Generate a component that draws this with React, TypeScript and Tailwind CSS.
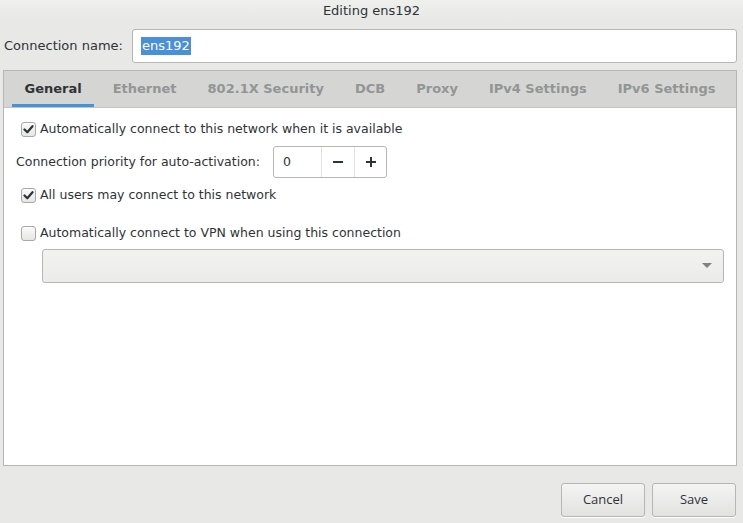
import { ReactNode } from "react";

const tabs = ["General", "Ethernet", "802.1X Security", "DCB", "Proxy", "IPv4 Settings", "IPv6 Settings"];

function CheckBox({ checked }: { checked: boolean }) {
  return (
    <span className="flex h-[15px] w-[15px] shrink-0 items-center justify-center rounded-[3px] border border-[#a8a8a5] bg-gradient-to-b from-[#fafafa] to-[#e6e6e5] shadow-[inset_0_1px_0_#ffffff]">
      {checked && (
        <svg width="11" height="11" viewBox="0 0 11 11">
          <path d="M1.5 5.5 L4.3 8.3 L9.5 2.2" fill="none" stroke="#2e3436" strokeWidth="2.2" strokeLinecap="round" strokeLinejoin="round" />
        </svg>
      )}
    </span>
  );
}

function CheckRow({ checked, children, className }: { checked: boolean; children: ReactNode; className?: string }) {
  return (
    <div className={"flex h-[20px] items-center gap-[4px] pl-[17px] " + (className ?? "")}>
      <CheckBox checked={checked} />
      <span className="whitespace-nowrap">{children}</span>
    </div>
  );
}

export default function App() {
  return (
    <div
      className="flex h-[523px] w-[743px] flex-col overflow-hidden bg-[#e8e8e7] text-[13px] text-[#2e3436]"
      style={{ fontFamily: '"DejaVu Sans", sans-serif' }}
    >
      <div className="flex h-[22px] shrink-0 items-center justify-center bg-gradient-to-b from-[#efefee] to-[#e8e8e7]">
        Editing ens192
      </div>

      <div className="mt-[7px] flex items-center pl-[4px] pr-[6px]">
        <span className="w-[128px] shrink-0">Connection name:</span>
        <div className="flex h-[34px] flex-1 items-center rounded-[3px] border border-[#b6b6b3] bg-white pl-[8px]">
          <span className="bg-[#4a90d9] px-px leading-[18px] text-white">ens192</span>
        </div>
      </div>

      <div className="ml-[3px] mr-[6px] mt-[7px] flex h-[396px] flex-col border border-[#b6b6b3] bg-white">
        <div className="flex h-[37px] shrink-0 items-stretch border-b border-[#c4c4c1] bg-[#d5d5d3] pl-[5px] font-bold whitespace-nowrap">
          {tabs.map((t, i) => (
            <div
              key={t}
              className={
                "mx-[3px] flex items-center px-[12.5px] pt-[3px] " +
                (i === 0 ? "border-b-[3px] border-[#4a90d9] text-[#2e3436]" : "border-b-[3px] border-transparent text-[#929595]")
              }
            >
              {t}
            </div>
          ))}
        </div>

        <div className="flex flex-col pt-[11px] text-[12.5px]">
          <CheckRow checked>Automatically connect to this network when it is available</CheckRow>

          <div className="mt-[7px] flex items-center pl-[12px]">
            <span className="w-[257px] shrink-0 whitespace-nowrap">Connection priority for auto-activation:</span>
            <div className="flex h-[32px] w-[114px] items-stretch rounded-[3px] border border-[#b6b6b3] bg-white">
              <span className="flex w-[47px] items-center pl-[9px]">0</span>
              <span className="flex w-[33px] items-center justify-center border-l border-[#e2e2e0]">
                <svg width="12" height="12" viewBox="0 0 12 12">
                  <rect x="1" y="5" width="10" height="2" fill="#2e3436" />
                </svg>
              </span>
              <span className="flex flex-1 items-center justify-center border-l border-[#e2e2e0]">
                <svg width="12" height="12" viewBox="0 0 12 12">
                  <rect x="1" y="5" width="10" height="2" fill="#2e3436" />
                  <rect x="5" y="1" width="2" height="10" fill="#2e3436" />
                </svg>
              </span>
            </div>
          </div>

          <CheckRow checked className="mt-[7px]">All users may connect to this network</CheckRow>
          <CheckRow checked={false} className="mt-[18px]">Automatically connect to VPN when using this connection</CheckRow>

          <div className="ml-[38px] mr-[12px] mt-[6px] flex h-[34px] items-center justify-end rounded-[3px] border border-[#b6b6b3] bg-gradient-to-b from-[#f2f2f1] to-[#ebebea] pr-[11px]">
            <svg width="10" height="6" viewBox="0 0 10 6">
              <path d="M0 0 L10 0 L5 5 Z" fill="#7f8282" />
            </svg>
          </div>
        </div>
      </div>

      <div className="mt-[17px] flex justify-end gap-[7px] pr-[7px]" style={{ fontFamily: '"Open Sans", sans-serif' }}>
        <button className="h-[34px] w-[84px] rounded-[3px] border border-[#b6b6b3] bg-gradient-to-b from-[#f4f4f4] to-[#e2e2e1] text-[13px] text-[#2e3436] shadow-[0_1px_0_#ffffff]">
          Cancel
        </button>
        <button className="h-[34px] w-[84px] rounded-[3px] border border-[#b6b6b3] bg-gradient-to-b from-[#f4f4f4] to-[#e2e2e1] text-[13px] text-[#2e3436] shadow-[0_1px_0_#ffffff]">
          Save
        </button>
      </div>
    </div>
  );
}
